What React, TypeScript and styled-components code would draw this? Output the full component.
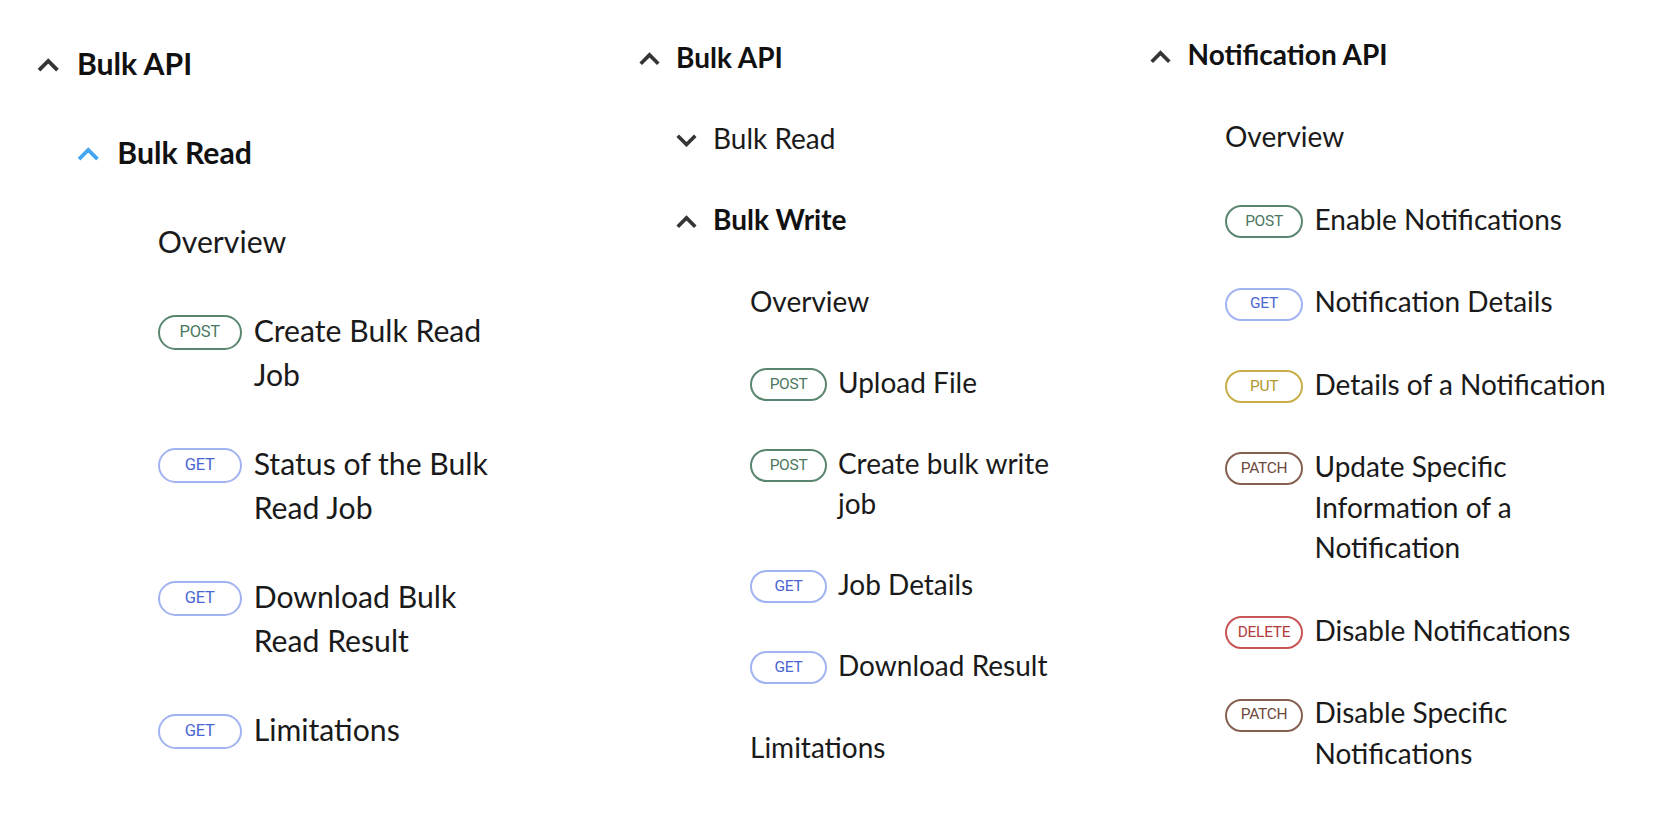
import React from "react";
import styled, { createGlobalStyle, ThemeProvider } from "styled-components";

type Scale = {
  font: number;
  line: number;
  pad: number;
  step: number;
  badgeW: number;
  badgeH: number;
  badgeFont: number;
  badgeTop: number;
  gap: number;
  textMax: number;
  chevW: number;
  chevH: number;
  top: number;
  left: number;
  width: number | null;
};

type Method = "GET" | "POST" | "PUT" | "PATCH" | "DELETE";

type TreeNode =
  | { kind: "group"; title: string; open: boolean; active?: boolean; strong?: boolean; children?: TreeNode[] }
  | { kind: "leaf"; title: string; method?: Method };

const methodColors: Record<Method, { border: string; text: string }> = {
  GET: { border: "#a2b3f1", text: "#4a66d2" },
  POST: { border: "#5a8670", text: "#4a7862" },
  PUT: { border: "#c8ad48", text: "#b0982e" },
  PATCH: { border: "#86604f", text: "#6d4a3c" },
  DELETE: { border: "#c85656", text: "#b33c3c" },
};

const Global = createGlobalStyle`
  html, body { margin: 0; padding: 0; background: #ffffff; }
  body {
    font-family: Lato, "Noto Sans", Arial, sans-serif;
    color: #161616;
    -webkit-font-smoothing: antialiased;
  }
`;

const Page = styled.div`
  display: flex;
  align-items: flex-start;
  width: 1670px;
  min-height: 830px;
  box-sizing: border-box;
`;

const Column = styled.nav`
  box-sizing: border-box;
  flex: ${(p) => (p.theme.width ? `0 0 ${p.theme.width}px` : "1 1 auto")};
  padding-top: ${(p) => p.theme.top}px;
  padding-left: ${(p) => p.theme.left}px;
  font-size: ${(p) => p.theme.font}px;
  line-height: ${(p) => p.theme.line}px;
`;

const Row = styled.div<{ $strong?: boolean }>`
  display: flex;
  align-items: flex-start;
  padding: ${(p) => p.theme.pad}px 0;
  font-weight: ${(p) => (p.$strong ? 700 : 400)};
  color: ${(p) => (p.$strong ? "#111111" : "#1a1a1a")};
`;

const ChevronSlot = styled.span`
  flex: 0 0 ${(p) => p.theme.step}px;
  height: ${(p) => p.theme.line}px;
  display: flex;
  align-items: center;
  padding-top: 4px;
  box-sizing: border-box;
`;

const ChevronSvg = styled.svg<{ $active?: boolean }>`
  width: ${(p) => p.theme.chevW}px;
  height: ${(p) => p.theme.chevH}px;
  color: ${(p) => (p.$active ? "#43a6f0" : "#353535")};
  display: block;
`;

const Children = styled.div`
  margin-left: ${(p) => p.theme.step}px;
`;

const Badge = styled.span<{ $method: Method }>`
  flex: 0 0 auto;
  box-sizing: border-box;
  width: ${(p) => p.theme.badgeW}px;
  height: ${(p) => p.theme.badgeH}px;
  margin-top: ${(p) => p.theme.badgeTop}px;
  margin-right: ${(p) => p.theme.gap}px;
  border: 2px solid ${(p) => methodColors[p.$method].border};
  color: ${(p) => methodColors[p.$method].text};
  border-radius: 999px;
  display: flex;
  align-items: center;
  justify-content: center;
  font-family: Roboto, "Liberation Sans", Arial, sans-serif;
  font-size: ${(p) => p.theme.badgeFont}px;
  line-height: 1;
  font-weight: 400;
  letter-spacing: -0.3px;
`;

const Label = styled.span`
  max-width: ${(p) => p.theme.textMax}px;
`;

const Chevron: React.FC<{ open: boolean; active?: boolean }> = ({ open, active }) => (
  <ChevronSvg $active={active} viewBox="0 0 22 14" fill="none" aria-hidden>
    <path
      d={open ? "M1.8 12.2 L11 3 L20.2 12.2" : "M1.8 1.8 L11 11 L20.2 1.8"}
      stroke="currentColor"
      strokeWidth={3.8}
      strokeLinecap="butt"
      strokeLinejoin="miter"
    />
  </ChevronSvg>
);

const TreeItem: React.FC<{ node: TreeNode }> = ({ node }) => {
  if (node.kind === "group") {
    return (
      <div>
        <Row $strong={node.strong}>
          <ChevronSlot>
            <Chevron open={node.open} active={node.active} />
          </ChevronSlot>
          <Label>{node.title}</Label>
        </Row>
        {node.open && node.children && (
          <Children>
            {node.children.map((c, i) => (
              <TreeItem key={i} node={c} />
            ))}
          </Children>
        )}
      </div>
    );
  }
  return (
    <Row>
      <ChevronSlot />
      {node.method && <Badge $method={node.method}>{node.method}</Badge>}
      <Label>{node.title}</Label>
    </Row>
  );
};

const col1: TreeNode = {
  kind: "group",
  title: "Bulk API",
  open: true,
  strong: true,
  children: [
    {
      kind: "group",
      title: "Bulk Read",
      open: true,
      active: true,
      strong: true,
      children: [
        { kind: "leaf", title: "Overview" },
        { kind: "leaf", title: "Create Bulk Read Job", method: "POST" },
        { kind: "leaf", title: "Status of the Bulk Read Job", method: "GET" },
        { kind: "leaf", title: "Download Bulk Read Result", method: "GET" },
        { kind: "leaf", title: "Limitations", method: "GET" },
      ],
    },
  ],
};

const col2: TreeNode = {
  kind: "group",
  title: "Bulk API",
  open: true,
  strong: true,
  children: [
    { kind: "group", title: "Bulk Read", open: false },
    {
      kind: "group",
      title: "Bulk Write",
      open: true,
      strong: true,
      children: [
        { kind: "leaf", title: "Overview" },
        { kind: "leaf", title: "Upload File", method: "POST" },
        { kind: "leaf", title: "Create bulk write job", method: "POST" },
        { kind: "leaf", title: "Job Details", method: "GET" },
        { kind: "leaf", title: "Download Result", method: "GET" },
        { kind: "leaf", title: "Limitations" },
      ],
    },
  ],
};

const col3: TreeNode = {
  kind: "group",
  title: "Notification API",
  open: true,
  strong: true,
  children: [
    { kind: "leaf", title: "Overview" },
    { kind: "leaf", title: "Enable Notifications", method: "POST" },
    { kind: "leaf", title: "Notification Details", method: "GET" },
    { kind: "leaf", title: "Details of a Notification", method: "PUT" },
    { kind: "leaf", title: "Update Specific Information of a Notification", method: "PATCH" },
    { kind: "leaf", title: "Disable Notifications", method: "DELETE" },
    { kind: "leaf", title: "Disable Specific Notifications", method: "PATCH" },
  ],
};

const scale1: Scale = {
  font: 30.2, line: 44.2, pad: 22.35, step: 40.4, badgeW: 84, badgeH: 35, badgeFont: 16.5,
  badgeTop: 7, gap: 12, textMax: 245, chevW: 22.5, chevH: 14, top: 18.7, left: 36.5, width: 639,
};
const scale2: Scale = {
  font: 28, line: 40, pad: 20.6, step: 37, badgeW: 77, badgeH: 33, badgeFont: 15.5,
  badgeTop: 6, gap: 11, textMax: 225, chevW: 21, chevH: 13.4, top: 16.5, left: 0, width: 511,
};
const scale3: Scale = {
  font: 28, line: 40.7, pad: 20.85, step: 37.5, badgeW: 78, badgeH: 33, badgeFont: 15.5,
  badgeTop: 6.5, gap: 11.5, textMax: 300, chevW: 21, chevH: 13.4, top: 13.2, left: 0, width: null,
};

const columns: { tree: TreeNode; scale: Scale }[] = [
  { tree: col1, scale: scale1 },
  { tree: col2, scale: scale2 },
  { tree: col3, scale: scale3 },
];

export default function App() {
  return (
    <>
      <Global />
      <Page>
        {columns.map((c, i) => (
          <ThemeProvider key={i} theme={c.scale}>
            <Column>
              <TreeItem node={c.tree} />
            </Column>
          </ThemeProvider>
        ))}
      </Page>
    </>
  );
}
